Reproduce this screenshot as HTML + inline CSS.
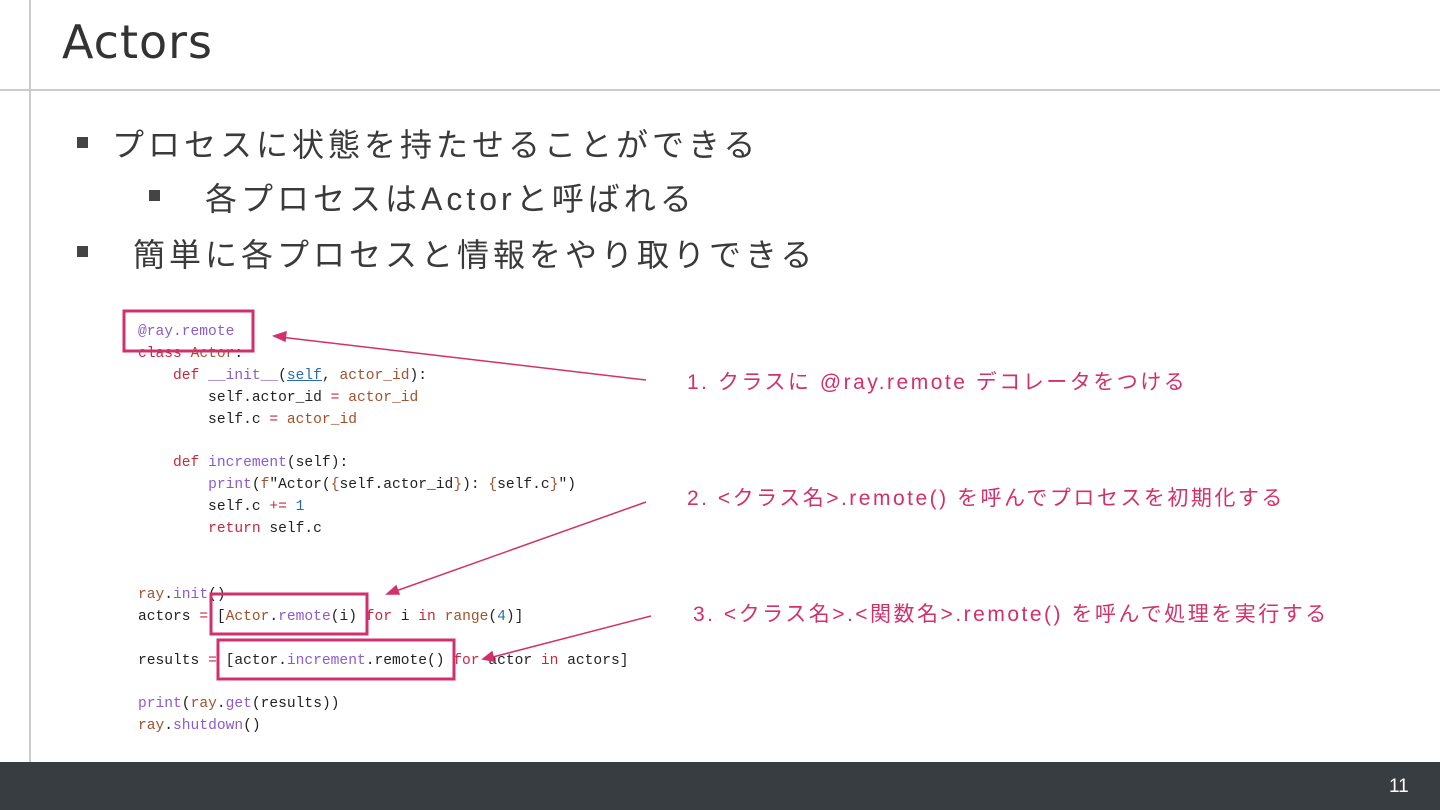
<!DOCTYPE html>
<html><head><meta charset="utf-8"><style>
body{margin:0;width:1440px;height:810px;position:relative;background:#fff;overflow:hidden;font-family:"Liberation Sans","Noto Sans CJK JP",sans-serif}
.a{position:absolute;white-space:nowrap}
.b{position:absolute;width:11px;height:11px;background:#444}
.t{font-size:32px;color:#3a3a3a;letter-spacing:4px}
.c{font-family:"Liberation Mono","DejaVu Sans Mono",monospace;font-size:14.6px;color:#222;line-height:21.9px}
.k{color:#c8283c}.p{color:#8a5cd0}.o{color:#a0522d}.n{color:#2a6ab0}
.an{font-size:21px;color:#d2306c;letter-spacing:2.5px}
</style></head><body>
<div class="a" style="left:0;top:89px;width:1440px;height:2px;background:#ccc"></div>
<div class="a" style="left:29px;top:0;width:2px;height:762px;background:#ccc"></div>
<div class="a" style="left:62px;top:15px;font-size:46px;color:#333;font-family:'DejaVu Sans','Liberation Sans',sans-serif;letter-spacing:1px">Actors</div>
<div class="b" style="left:77px;top:137px"></div>
<div class="a t" style="left:112px;top:120px">プロセスに状態を持たせることができる</div>
<div class="b" style="left:149px;top:190px"></div>
<div class="a t" style="left:205px;top:174px">各プロセスはActorと呼ばれる</div>
<div class="b" style="left:77px;top:246px"></div>
<div class="a t" style="left:133px;top:230px">簡単に各プロセスと情報をやり取りできる</div>
<div class="a c" style="left:138px;top:322px"><span class="p">@ray.remote</span><br><span class="k">class</span> <span class="o">Actor</span>:<br>&nbsp;&nbsp;&nbsp;&nbsp;<span class="k">def</span> <span class="p">__init__</span>(<span class="n" style="text-decoration:underline">self</span>, <span class="o">actor_id</span>):<br>&nbsp;&nbsp;&nbsp;&nbsp;&nbsp;&nbsp;&nbsp;&nbsp;self.actor_id <span class="k">=</span> <span class="o">actor_id</span><br>&nbsp;&nbsp;&nbsp;&nbsp;&nbsp;&nbsp;&nbsp;&nbsp;self.c <span class="k">=</span> <span class="o">actor_id</span><br><br>&nbsp;&nbsp;&nbsp;&nbsp;<span class="k">def</span> <span class="p">increment</span>(self):<br>&nbsp;&nbsp;&nbsp;&nbsp;&nbsp;&nbsp;&nbsp;&nbsp;<span class="p">print</span>(<span class="o">f</span>"Actor(<span class="o">{</span>self.actor_id<span class="o">}</span>): <span class="o">{</span>self.c<span class="o">}</span>")<br>&nbsp;&nbsp;&nbsp;&nbsp;&nbsp;&nbsp;&nbsp;&nbsp;self.c <span class="k">+=</span> <span class="n">1</span><br>&nbsp;&nbsp;&nbsp;&nbsp;&nbsp;&nbsp;&nbsp;&nbsp;<span class="k">return</span> self.c<br><br><br><span class="o">ray</span>.<span class="p">init</span>()<br>actors <span class="k">=</span> [<span class="o">Actor</span>.<span class="p">remote</span>(i) <span class="k">for</span> i <span class="k">in</span> <span class="o">range</span>(<span class="n">4</span>)]<br><br>results <span class="k">=</span> [actor.<span class="p">increment</span>.remote() <span class="k">for</span> actor <span class="k">in</span> actors]<br><br><span class="p">print</span>(<span class="o">ray</span>.<span class="p">get</span>(results))<br><span class="o">ray</span>.<span class="p">shutdown</span>()</div>
<svg class="a" style="left:0;top:0" width="1440" height="810">
<g fill="none" stroke="#d2306c" stroke-width="3">
<rect x="124" y="311" width="129" height="40"/>
<rect x="211" y="594" width="156" height="40"/>
<rect x="218" y="640" width="236" height="39"/>
</g>
<g stroke="#d2306c" stroke-width="1.5" fill="#d2306c">
<line x1="646" y1="380" x2="280" y2="337"/>
<polygon points="274,336 286,332 285,341"/>
<line x1="646" y1="502" x2="393" y2="592"/>
<polygon points="387,594 396,586 399,594"/>
<line x1="651" y1="616" x2="489" y2="658"/>
<polygon points="483,659 492,652 494,661"/>
</g>
</svg>
<div class="a an" style="left:687px;top:366px">1. クラスに @ray.remote デコレータをつける</div>
<div class="a an" style="left:687px;top:482px">2. &lt;クラス名&gt;.remote() を呼んでプロセスを初期化する</div>
<div class="a an" style="left:693px;top:598px">3. &lt;クラス名&gt;.&lt;関数名&gt;.remote() を呼んで処理を実行する</div>
<div class="a" style="left:0;top:762px;width:1440px;height:48px;background:#383d41"></div>
<div class="a" style="left:1389px;top:776px;font-size:19px;color:#fff">11</div>
</body></html>
